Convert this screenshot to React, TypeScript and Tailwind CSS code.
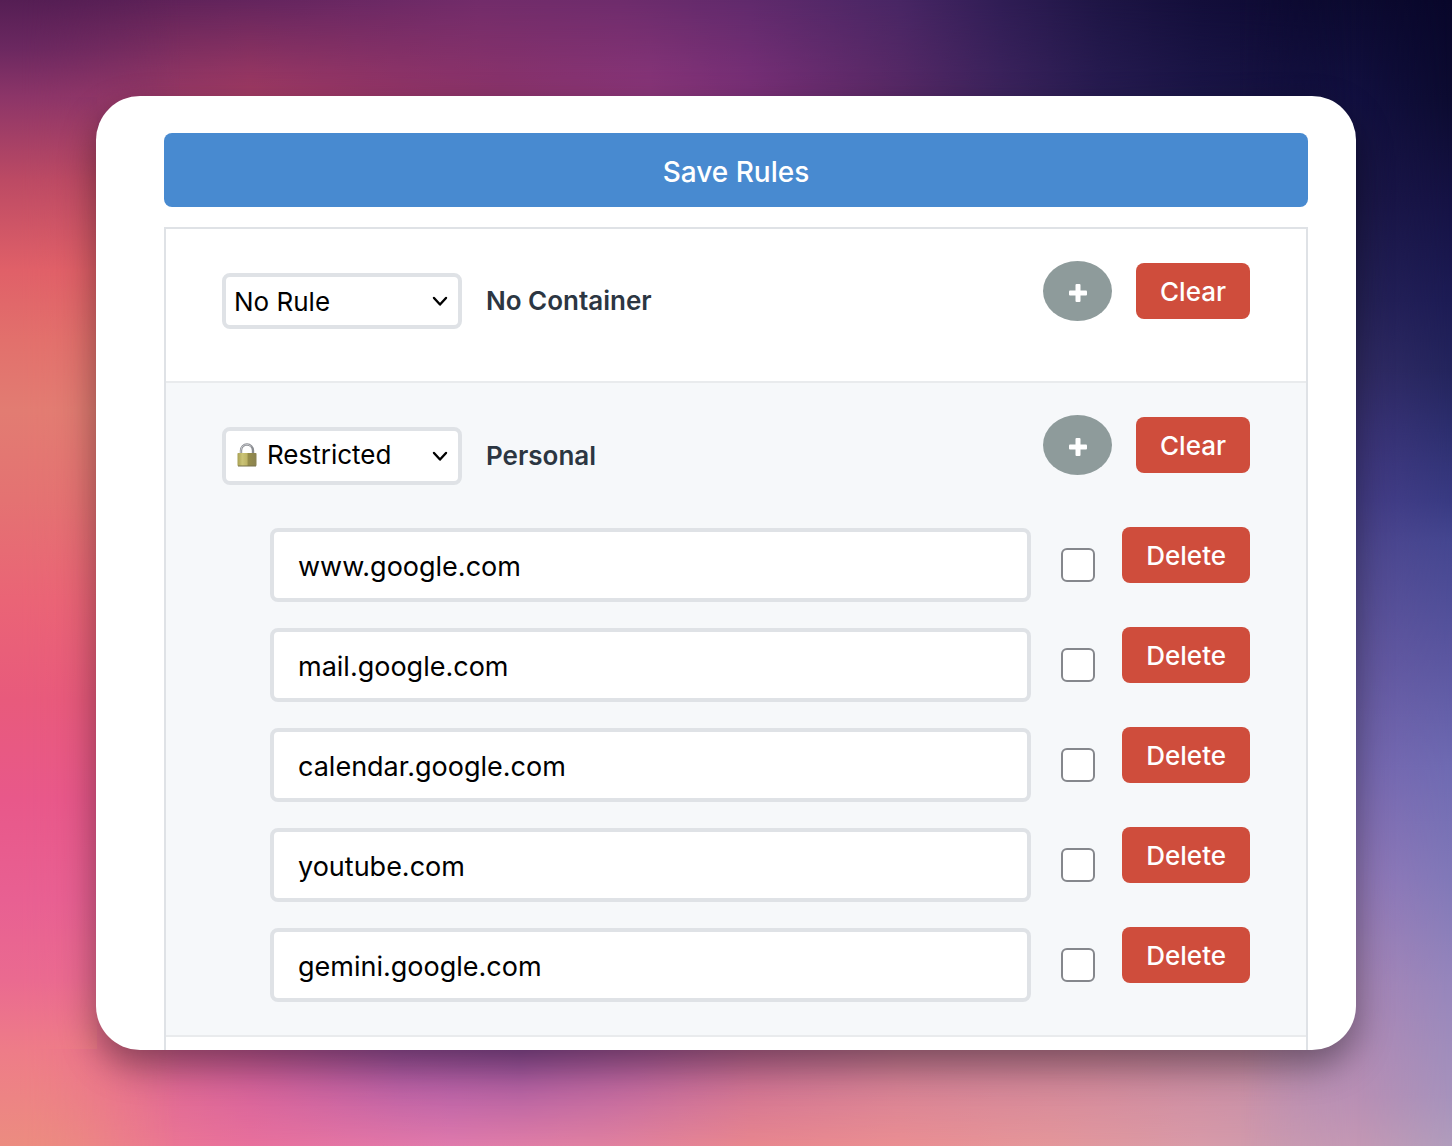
import { useState } from 'react'

const domains = [
  "www.google.com",
  "mail.google.com",
  "calendar.google.com",
  "youtube.com",
  "gemini.google.com"
]

type Stop = [number, string]

const topOuter: Stop[] = [[0, "#551e54"], [150, "#5e2258"], [300, "#662660"], [480, "#722c6a"], [620, "#6e2c6c"], [750, "#602a6c"], [900, "#482664"], [1000, "#301d55"], [1100, "#1e1545"], [1200, "#130e3a"], [1400, "#08062c"]]
const topInner: Stop[] = [[0, "#8c3568"], [150, "#9a3a68"], [250, "#a53c64"], [400, "#963668"], [500, "#8e346c"], [650, "#8c367a"], [750, "#7c3078"], [880, "#5e2a68"], [1000, "#3e245e"], [1100, "#281c52"], [1200, "#1b1648"], [1400, "#100e38"]]
const bottomInner: Stop[] = [[0, "#ee7c88"], [100, "#e66a90"], [250, "#cc5c9a"], [400, "#a454a4"], [520, "#9850a0"], [640, "#b05ca0"], [750, "#c46a98"], [900, "#cc7c98"], [1100, "#cc849c"], [1250, "#c48aa4"], [1350, "#b48cb4"], [1452, "#a48ebe"]]
const bottomOuter: Stop[] = [[0, "#ec8c80"], [120, "#ec7890"], [250, "#e8709c"], [450, "#e07aac"], [600, "#e080a0"], [750, "#e8868e"], [900, "#ea8e92"], [1050, "#e4969a"], [1200, "#d89aa8"], [1350, "#c49ab2"], [1452, "#b09cbc"]]
const left: Stop[] = [[0, "#551e54"], [48, "#6b2860"], [96, "#8c3568"], [180, "#bc4a64"], [270, "#e06068"], [340, "#e2706c"], [410, "#e27c72"], [500, "#e47272"], [600, "#ea6476"], [700, "#e85a7c"], [800, "#e8588a"], [900, "#e86092"], [980, "#ea6a90"], [1050, "#ee7c88"], [1146, "#ec8c80"]]
const rightInner: Stop[] = [[0, "#0c0a30"], [100, "#121040"], [200, "#1b1748"], [300, "#262258"], [370, "#322c66"], [430, "#3c3478"], [500, "#463e88"], [560, "#524a92"], [658, "#6458a0"], [767, "#7868b0"], [877, "#9278b8"], [987, "#a886b6"], [1096, "#b88fb4"], [1146, "#c498b4"]]
const rightOuter: Stop[] = [[0, "#08062a"], [100, "#0c0b30"], [200, "#151244"], [300, "#1c1b54"], [370, "#23245c"], [430, "#2c2e6e"], [500, "#383a82"], [541, "#444690"], [658, "#5a56a0"], [767, "#6e6ab2"], [877, "#8078b8"], [987, "#9686bc"], [1096, "#a692bc"], [1146, "#b09cbc"]]

function Ramp({ id, stops, vertical }: { id: string; stops: Stop[]; vertical?: boolean }) {
  const length = vertical ? 1146 : 1452
  return (
    <linearGradient id={id} x1="0" y1="0" x2={vertical ? 0 : length} y2={vertical ? length : 0} gradientUnits="userSpaceOnUse">
      {stops.map(([at, color]) => (
        <stop key={at} offset={at / length} stopColor={color} />
      ))}
    </linearGradient>
  )
}

// Fades a layer in from (x1, y1) to (x2, y2)
function Fade({ id, x1, y1, x2, y2 }: { id: string; x1: number; y1: number; x2: number; y2: number }) {
  return (
    <>
      <linearGradient id={`${id}-ramp`} x1={x1} y1={y1} x2={x2} y2={y2} gradientUnits="userSpaceOnUse">
        <stop offset="0" stopColor="white" stopOpacity={0} />
        <stop offset="1" stopColor="white" />
      </linearGradient>
      <mask id={id} maskUnits="userSpaceOnUse" x="0" y="0" width="1452" height="1146">
        <rect width="1452" height="1146" fill={`url(#${id}-ramp)`} />
      </mask>
    </>
  )
}

function Backdrop() {
  return (
    <svg className="absolute inset-0 w-full h-full" viewBox="0 0 1452 1146" preserveAspectRatio="none" aria-hidden="true">
      <defs>
        <Ramp id="top-outer" stops={topOuter} />
        <Ramp id="top-inner" stops={topInner} />
        <Ramp id="bottom-inner" stops={bottomInner} />
        <Ramp id="bottom-outer" stops={bottomOuter} />
        <Ramp id="left" stops={left} vertical />
        <Ramp id="right-inner" stops={rightInner} vertical />
        <Ramp id="right-outer" stops={rightOuter} vertical />
        <Fade id="fade-up" x1={0} y1={100} x2={0} y2={0} />
        <Fade id="fade-down" x1={0} y1={1050} x2={0} y2={1146} />
        <Fade id="fade-left" x1={180} y1={0} x2={20} y2={0} />
        <Fade id="fade-right" x1={1240} y1={0} x2={1356} y2={0} />
        <Fade id="fade-edge" x1={1356} y1={0} x2={1452} y2={0} />
      </defs>
      <rect width="1452" height="573" fill="url(#top-inner)" />
      <rect width="1452" height="573" fill="url(#top-outer)" mask="url(#fade-up)" />
      <rect y="573" width="1452" height="573" fill="url(#bottom-inner)" />
      <rect y="573" width="1452" height="573" fill="url(#bottom-outer)" mask="url(#fade-down)" />
      <rect y="97" width="97" height="952" fill="url(#left)" />
      <rect width="300" height="1146" fill="url(#left)" mask="url(#fade-left)" />
      <rect x="1200" width="252" height="1146" fill="url(#right-inner)" mask="url(#fade-right)" />
      <rect x="1300" width="152" height="1146" fill="url(#right-outer)" mask="url(#fade-edge)" />
    </svg>
  )
}

function LockIcon() {
  return (
    <svg className="w-6 h-6" viewBox="0 0 24 24" fill="none" aria-hidden="true">
      <defs>
        <linearGradient id="brass" x1="0" x2="1" y1="0" y2="0">
          <stop offset="0" stopColor="#a8a052" />
          <stop offset="0.25" stopColor="#cbc477" />
          <stop offset="0.5" stopColor="#bdb466" />
          <stop offset="0.56" stopColor="#968d4a" />
          <stop offset="1" stopColor="#8a8250" />
        </linearGradient>
      </defs>
      <path d="M6 12V7.500a6 6 0 0 1 12 0V12" stroke="#8b8d92" strokeWidth={2.4} />
      <path d="M5.800 11V7.500a6 6 0 0 1 10.500-4" stroke="#c5c7cb" strokeWidth={1} />
      <rect x="2.500" y="10" width="19" height="13" rx="0.800" fill="url(#brass)" />
      <path d="M3 23H21" stroke="#77704a" />
    </svg>
  )
}

function ContainerHeader({ id, name, rule, locked }: { id: string; name: string; rule: string; locked?: boolean }) {
  return (
    <div className="flex items-start">
      <div className="flex items-center pt-3">
        <div className="relative">
          <select
            id={id}
            defaultValue={rule}
            className={`appearance-none w-60 rounded-lg border-4 border-[#dfe2e6] bg-white text-[26px] leading-8 text-black ${locked ? "pt-2 pb-[10px] pl-[41px]" : "pt-[9px] pb-[7px] pl-2"}`}
          >
            <option>{rule}</option>
          </select>
          {locked && (
            <span className="pointer-events-none absolute inset-y-0 left-[13px] flex items-center pb-0.5">
              <LockIcon />
            </span>
          )}
          <svg className="pointer-events-none absolute inset-y-0 right-3 my-auto w-5 h-5" viewBox="0 0 20 20" fill="none" stroke="black" aria-hidden="true">
            <path strokeLinecap="round" strokeLinejoin="round" strokeWidth={2.4} d="M4 7l6 6.500 6-6.500" />
          </svg>
        </div>
        <label htmlFor={id} className="ml-6 text-[26px] leading-8 font-semibold text-[#2c3642]">
          {name}
        </label>
      </div>
      <div className="ml-auto flex items-center gap-6">
        <button aria-label={`Add to ${name}`} className="flex h-[60px] w-[69px] items-center justify-center rounded-[50%] bg-[#8e9b9b] pt-1 text-white">
          <svg className="w-5 h-5" viewBox="0 0 20 20" fill="currentColor" aria-hidden="true">
            <rect x="1" y="7.500" width="18" height="5" rx="1" />
            <rect x="7.500" y="1" width="5" height="18" rx="1" />
          </svg>
        </button>
        <button className="h-14 rounded-lg bg-[#cf4d3c] px-6 pt-0.5 text-[26px] leading-8 font-medium text-white">
          Clear
        </button>
      </div>
    </div>
  )
}

export default function App() {
  const [urls, setUrls] = useState(domains)

  return (
    <main className="relative min-h-screen p-24 font-[Inter,'Liberation_Sans',sans-serif]">
      <Backdrop />
      <div className="relative overflow-hidden rounded-[44px] bg-white pt-[37px] pr-12 pl-[68px] shadow-[0_16px_36px_rgba(0,0,0,0.4)]">
        <button className="mb-5 w-full rounded-lg bg-[#488ad0] pt-[22px] pb-[18px] text-[28px] leading-[34px] font-medium text-white">
          Save Rules
        </button>

        <div className="border-x-2 border-t-2 border-[#dfe2e6]">
          <section className="border-b-2 border-[#e9ebed] px-14 pt-8 pb-[52px]">
            <ContainerHeader id="rule-none" name="No Container" rule="No Rule" />
          </section>

          <section className="border-b-2 border-[#e9ebed] bg-[#f6f8fa] px-14 pt-8 pb-8">
            <ContainerHeader id="rule-personal" name="Personal" rule="Restricted" locked />

            <ul className="mt-[42px] ml-12 space-y-6">
              {urls.map((url, index) => (
                <li key={index} className="flex items-center">
                  <input
                    type="text"
                    aria-label={`Domain ${index + 1}`}
                    value={url}
                    onChange={(e) => setUrls(urls.map((u, i) => (i === index ? e.target.value : u)))}
                    className="min-w-0 flex-1 rounded-lg border-4 border-[#dfe2e6] bg-white px-6 pt-[18px] pb-[14px] text-[27px] leading-[34px] text-black"
                  />
                  <input
                    type="checkbox"
                    aria-label={`Match subdomains of ${url}`}
                    className="ml-[30px] mr-[27px] h-[34px] w-[34px] appearance-none rounded-md border-2 border-[#85878c] bg-white checked:bg-[#488ad0]"
                  />
                  <button className="mb-5 h-14 rounded-lg bg-[#cf4d3c] px-6 pt-0.5 text-[26px] leading-8 font-medium text-white">
                    Delete
                  </button>
                </li>
              ))}
            </ul>
          </section>
          <div className="h-[13px]" />
        </div>
      </div>
    </main>
  )
}
